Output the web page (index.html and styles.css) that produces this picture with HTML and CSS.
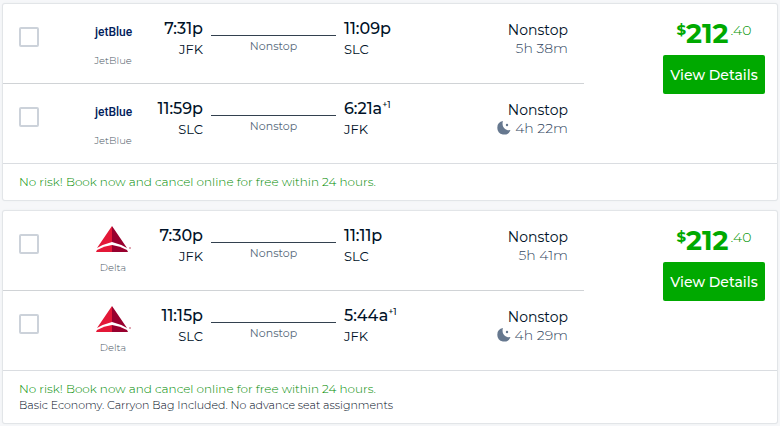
FILE: index.html
```html
<!DOCTYPE html>
<html lang="en">
  <head>
    <meta charset="UTF-8">
    <meta name="viewport" content="width=device-width, initial-scale=1">
    <title>Flight results</title>
    <link rel="stylesheet" href="styles.css">
  </head>
  <body>
    <svg class="sprite" aria-hidden="true">
      <symbol id="delta" viewBox="0 0 36 26">
        <path fill="#e31837" d="M17 0v16Q9 18 2 22z"/>
        <path fill="#98002e" d="M17 0v16q8 2 15 6z"/>
        <path fill="#e31837" d="M17 19v7H1l1-2q7-4 15-5z"/>
        <path fill="#98002e" d="M17 19v7h16l-1-2q-7-4-15-5z"/>
        <circle fill="#d58a9b" cx="35" cy="22" r="1"/>
      </symbol>
      <symbol id="moon" viewBox="0 0 14 14">
        <path fill="#66788f" d="M6 0a6.800 6.800 0 1 0 7.500 9C9 10 4 6 6 0z"/>
        <circle fill="#66788f" cx="10" cy="4" r="1.200"/>
      </symbol>
    </svg>

    <main class="results">
      <article class="card">
        <div class="itinerary">
          <div class="legs">
            <div class="leg">
              <input class="check" type="checkbox" aria-label="Select JetBlue JFK to SLC">
              <div class="airline">
                <span class="logo jetblue">jetBlue</span>
                <span class="carrier">JetBlue</span>
              </div>
              <div class="depart">
                <div class="time">7:31p</div>
                <div class="airport">JFK</div>
              </div>
              <div class="route">Nonstop</div>
              <div class="arrive">
                <div class="time">11:09p</div>
                <div class="airport">SLC</div>
              </div>
              <div class="duration">
                <div class="stops">Nonstop</div>
                <div class="length">5h 38m</div>
              </div>
            </div>
            <div class="leg">
              <input class="check" type="checkbox" aria-label="Select JetBlue SLC to JFK">
              <div class="airline">
                <span class="logo jetblue">jetBlue</span>
                <span class="carrier">JetBlue</span>
              </div>
              <div class="depart">
                <div class="time">11:59p</div>
                <div class="airport">SLC</div>
              </div>
              <div class="route">Nonstop</div>
              <div class="arrive">
                <div class="time">6:21a<sup>+1</sup></div>
                <div class="airport">JFK</div>
              </div>
              <div class="duration">
                <div class="stops">Nonstop</div>
                <div class="length"><svg class="moon"><use href="#moon"/></svg>4h 22m</div>
              </div>
            </div>
          </div>
          <div class="booking">
            <div class="price"><span class="currency">$</span><span class="dollars">212</span><span class="cents">.40</span></div>
            <button class="details" type="button">View Details</button>
          </div>
        </div>
        <div class="notes">
          <p class="no-risk">No risk! Book now and cancel online for free within 24 hours.</p>
        </div>
      </article>

      <article class="card">
        <div class="itinerary">
          <div class="legs">
            <div class="leg">
              <input class="check" type="checkbox" aria-label="Select Delta JFK to SLC">
              <div class="airline">
                <svg class="logo"><use href="#delta"/></svg>
                <span class="carrier">Delta</span>
              </div>
              <div class="depart">
                <div class="time">7:30p</div>
                <div class="airport">JFK</div>
              </div>
              <div class="route">Nonstop</div>
              <div class="arrive">
                <div class="time">11:11p</div>
                <div class="airport">SLC</div>
              </div>
              <div class="duration">
                <div class="stops">Nonstop</div>
                <div class="length">5h 41m</div>
              </div>
            </div>
            <div class="leg">
              <input class="check" type="checkbox" aria-label="Select Delta SLC to JFK">
              <div class="airline">
                <svg class="logo"><use href="#delta"/></svg>
                <span class="carrier">Delta</span>
              </div>
              <div class="depart">
                <div class="time">11:15p</div>
                <div class="airport">SLC</div>
              </div>
              <div class="route">Nonstop</div>
              <div class="arrive">
                <div class="time">5:44a<sup>+1</sup></div>
                <div class="airport">JFK</div>
              </div>
              <div class="duration">
                <div class="stops">Nonstop</div>
                <div class="length"><svg class="moon"><use href="#moon"/></svg>4h 29m</div>
              </div>
            </div>
          </div>
          <div class="booking">
            <div class="price"><span class="currency">$</span><span class="dollars">212</span><span class="cents">.40</span></div>
            <button class="details" type="button">View Details</button>
          </div>
        </div>
        <div class="notes">
          <p class="no-risk">No risk! Book now and cancel online for free within 24 hours.</p>
          <p class="fare">Basic Economy. Carryon Bag Included. No advance seat assignments</p>
        </div>
      </article>
    </main>
  </body>
</html>
```

FILE: styles.css
```css
body {
  margin: 0;
  background: #f6f7f9;
  color: #001228;
  font-family: Montserrat, Inter, "Open Sans", sans-serif;
}

.sprite {
  display: none;
}

.results {
  display: flex;
  flex-direction: column;
  gap: 11px;
  padding: 4px 3px 3px;
}

.card {
  border-radius: 2px;
  background: #fff;
  box-shadow: 0 0 0 1px #e2e5e8, 0 0 3px #e2e5e8;
}

.itinerary {
  display: flex;
  border-bottom: 1px solid #dadde1;
}
.legs {
  flex: 1;
}

.leg {
  display: grid;
  grid-template-columns: 20px 94px 54px 125px 64px 1fr;
  column-gap: 8px;
  height: 64px;
  padding: 15px 16px 0;
}
.leg + .leg {
  border-top: 1px solid #d0d3d6;
}

.check {
  appearance: none;
  box-sizing: border-box;
  width: 20px;
  height: 20px;
  margin: 8px 0 0;
  border: 2px solid #ccd2da;
  border-radius: 2px;
  background: #fff;
}
.check:checked {
  background: #00a900;
}

.airline {
  display: flex;
  flex-direction: column;
  align-items: center;
  gap: 9px;
  padding-left: 38px;
}
.logo {
  width: 36px;
  height: 26px;
}
.jetblue {
  color: #00205b;
  font: 500 12px/26px Roboto, sans-serif;
  text-align: center;
}
.carrier {
  color: #4c5967;
  font-size: 10px;
  font-weight: 300;
  line-height: 14px;
}

.depart {
  text-align: right;
}
.time {
  font-size: 16px;
  font-weight: 500;
  line-height: 20px;
  white-space: nowrap;
}
.time sup {
  font-size: 9px;
  line-height: 0;
}
.airport {
  font-size: 13px;
  line-height: 20px;
}

.route {
  align-self: start;
  margin-top: 16px;
  border-top: 1px solid #33414f;
  color: #55687a;
  font-size: 11px;
  line-height: 20px;
  text-align: center;
}

.duration {
  padding-top: 2px;
  font-size: 14px;
  line-height: 18px;
  text-align: right;
  white-space: nowrap;
}
.length {
  color: #33475f;
  font-weight: 300;
}
.moon {
  width: 14px;
  height: 14px;
  margin-right: 4px;
  vertical-align: -2px;
}

.booking {
  display: flex;
  flex-direction: column;
  align-items: flex-end;
  width: 181px;
  padding: 13px 12px 0 0;
}
.price {
  display: flex;
  justify-content: center;
  width: 102px;
  color: #00a900;
}
.currency {
  font-size: 15px;
  font-weight: 700;
  line-height: 26px;
}
.dollars {
  font-size: 27px;
  font-weight: 700;
  line-height: 34px;
}
.cents {
  margin-left: 2px;
  color: #009400;
  font-size: 14px;
  font-weight: 300;
  line-height: 26px;
}
.details {
  width: 102px;
  height: 39px;
  margin-top: 4px;
  padding: 0;
  border: 0;
  border-radius: 2px;
  background: #00a900;
  color: #fff;
  font: 500 14px/20px Montserrat, Inter, "Open Sans", sans-serif;
  cursor: pointer;
}

.notes {
  padding: 10px 16px;
  font-weight: 300;
}
.notes p {
  margin: 0;
  line-height: 16px;
}
.no-risk {
  color: #008c00;
  font-size: 12px;
}
.fare {
  color: #000a1a;
  font-size: 11px;
}
```
